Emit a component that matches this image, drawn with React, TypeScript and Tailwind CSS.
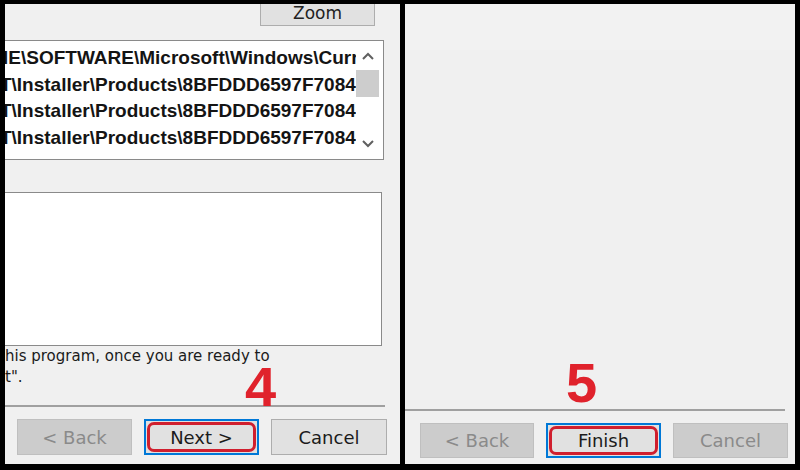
import React from 'react';

const rows = [
  'HKEY_LOCAL_MACHINE\\SOFTWARE\\Microsoft\\Windows\\CurrentVersion\\Uninstall',
  'HKEY_CLASSES_ROOT\\Installer\\Products\\8BFDDD6597F70843A0C3E9D0A2B1F6C4',
  'HKEY_CLASSES_ROOT\\Installer\\Products\\8BFDDD6597F70843A0C3E9D0A2B1F6C4\\SourceList',
  'HKEY_CLASSES_ROOT\\Installer\\Products\\8BFDDD6597F70843A0C3E9D0A2B1F6C4\\Features',
  'HKEY_LOCAL_MACHINE\\SOFTWARE\\Classes\\Installer\\Features',
];

const WinButton: React.FC<{
  label: string;
  disabled?: boolean;
  isDefault?: boolean;
  className?: string;
}> = ({ label, disabled, isDefault, className = '' }) => {
  if (isDefault) {
    return (
      <div className={`flex items-center justify-center border-2 border-[#0078d7] bg-[#e1e1e1] p-px ${className}`}>
        <div className="flex h-full w-full items-center justify-center rounded-[7px] border-[3px] border-[#d01f2e]">
          <span className="text-[18px] text-[#1b1b1b]">{label}</span>
        </div>
      </div>
    );
  }
  return (
    <div
      className={`flex items-center justify-center border ${
        disabled ? 'border-[#bfbfbf] bg-[#cccccc] text-[#8a8a8a]' : 'border-[#adadad] bg-[#e1e1e1] text-[#1b1b1b]'
      } ${className}`}
    >
      <span className="text-[18px]">{label}</span>
    </div>
  );
};

const StepNumber: React.FC<{ n: string; className: string }> = ({ n, className }) => (
  <div
    className={`absolute text-[56px] leading-none font-bold text-[#e0222c] [font-family:'Liberation_Sans',Arial,sans-serif] ${className}`}
  >
    {n}
  </div>
);

export default function App() {
  return (
    <div className="flex h-[470px] w-[800px] gap-[5px] overflow-hidden bg-black pt-[4px] pr-[5px] pb-[6px] pl-[5px] [font-family:'DejaVu_Sans',Verdana,sans-serif]">
      {/* left: uninstall wizard, step 4 */}
      <div className="relative flex w-[395px] flex-col overflow-hidden bg-[#f0f0f0]">
        <div className="ml-[255px] -mt-[10px] flex h-[32px] w-[115px] items-center justify-center border border-[#adadad] bg-[#e1e1e1]">
          <span className="mt-[6px] text-[17px] leading-[20px] text-[#222]">Zoom</span>
        </div>

        <div className="mt-[14px] -ml-[300px] flex h-[120px] w-[679px] shrink-0 border border-[#8a8a8a] bg-white">
          <div className="relative mb-[2px] flex-1 overflow-hidden">
            <div className="absolute left-[87px] top-[4px]">
              {rows.map((row) => (
                <div
                  key={row}
                  className="h-[26.5px] whitespace-nowrap text-[19px] leading-[26.5px] font-bold text-[#141414] [font-family:'Liberation_Sans',Arial,sans-serif]"
                >
                  {row}
                </div>
              ))}
            </div>
          </div>
          <div className="mr-[4px] flex w-[23px] flex-col items-center bg-white">
            <svg className="mt-[11px]" width="12" height="8" viewBox="0 0 12 8">
              <path d="M1 7 L6 2 L11 7" fill="none" stroke="#606060" strokeWidth="2" />
            </svg>
            <div className="mt-[10px] h-[27px] w-full bg-[#cdcdcd]" />
            <div className="flex-1" />
            <svg className="mb-[11px]" width="12" height="8" viewBox="0 0 12 8">
              <path d="M1 1 L6 6 L11 1" fill="none" stroke="#606060" strokeWidth="2" />
            </svg>
          </div>
        </div>

        <div className="mt-[32px] -ml-[10px] h-[154px] w-[387px] shrink-0 border border-[#8a8a8a] bg-white" />

        <div className="text-[15px] leading-[21px] text-[#1b1b1b] [font-family:'DejaVu_Sans',Tahoma,sans-serif]">
          <div className="whitespace-nowrap">his program, once you are ready to</div>
          <div className="whitespace-nowrap">t".</div>
        </div>

        <div className="mt-[17px] h-[2px] w-[380px] shrink-0 bg-[#a0a0a0]" />

        <div className="mt-[12px] ml-[12px] flex gap-[12px]">
          <WinButton label="< Back" disabled className="h-[36px] w-[115px]" />
          <WinButton label="Next >" isDefault className="h-[36px] w-[115px]" />
          <WinButton label="Cancel" className="h-[36px] w-[116px]" />
        </div>

        <StepNumber n="4" className="left-[240px] top-[355px]" />
      </div>

      {/* right: finish page, step 5 */}
      <div className="relative flex w-[390px] flex-col bg-[#f0f0f0]">
        <div className="h-[46px] bg-[#f2f2f2]" />
        <div className="flex-1" />
        <div className="h-[2px] w-[380px] bg-[#a0a0a0]" />
        <div className="mt-[12px] mb-[6px] ml-[15px] flex gap-[12px]">
          <WinButton label="< Back" disabled className="h-[35px] w-[114px]" />
          <WinButton label="Finish" isDefault className="h-[35px] w-[115px]" />
          <WinButton label="Cancel" disabled className="h-[35px] w-[115px]" />
        </div>
        <StepNumber n="5" className="left-[161px] top-[351px]" />
      </div>
    </div>
  );
}
